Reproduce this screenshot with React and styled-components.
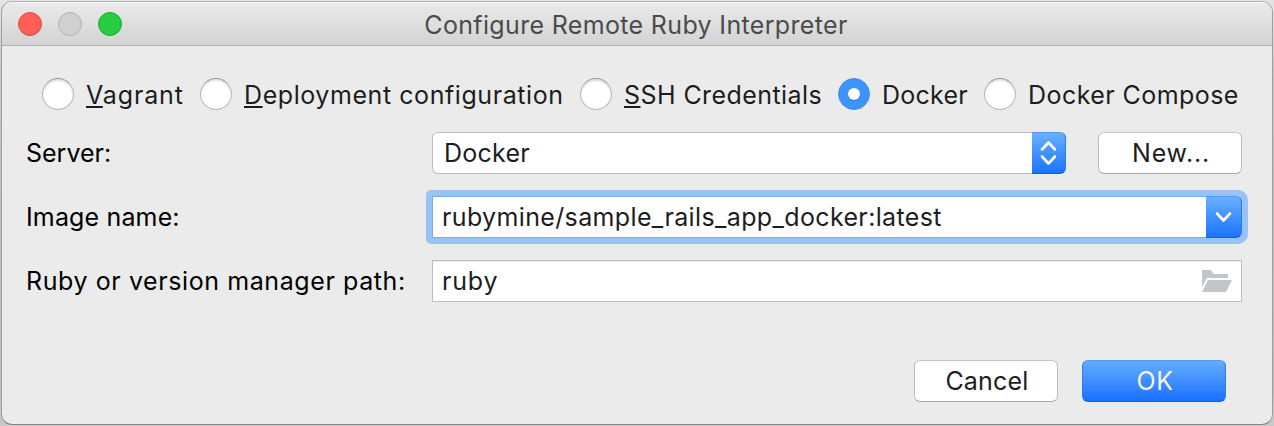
import React from "react";
import styled, { createGlobalStyle } from "styled-components";

const Global = createGlobalStyle`
  * { box-sizing: border-box; }
  body {
    margin: 0;
    background: linear-gradient(#e4e4e4, #c4c4c4 18%, #bdbdbd 90%, #c9c9c9);
    font: 25px/30px Inter, "Liberation Sans", sans-serif;
    color: #1d1d1f;
  }
  button, input { font: inherit; color: inherit; }
`;

const Screen = styled.div`
  width: 1274px;
  height: 426px;
  padding: 1px;
`;

const Dialog = styled.main`
  display: flex;
  flex-direction: column;
  height: 424px;
  border: 1px solid #a0a0a0;
  border-top-color: #b4b4b4;
  border-bottom-color: #858585;
  border-radius: 11px;
  background: #ebebeb;
  overflow: hidden;
`;

const TitleBar = styled.header`
  display: grid;
  grid-template-columns: 200px 1fr 200px;
  align-items: center;
  height: 44px;
  border-bottom: 1px solid #b0b0b0;
  background: linear-gradient(#f5f5f5 0, #e9e9e9 2px, #d3d3d3);
`;

const Lights = styled.div`
  display: flex;
  gap: 16px;
  padding-left: 16px;
`;

const Light = styled.span`
  width: 24px;
  height: 24px;
  border-radius: 50%;
  border: 1px solid ${(p) => p.$edge};
  background: ${(p) => p.$fill};
`;

const Title = styled.h1`
  margin: 0;
  padding: 2px 2px 0 0;
  font-size: 25px;
  font-weight: 400;
  color: #4b4b4b;
  text-align: center;
`;

const Text = styled.span`
  white-space: nowrap;
  letter-spacing: ${(p) => p.$track || 0}px;
`;

const RadioRow = styled.div`
  display: flex;
  padding: 32px 0 0 40px;
`;

const Radio = styled.div`
  display: flex;
  align-items: center;
  gap: 12px;
  width: ${(p) => p.$width}px;
  height: 32px;
`;

const RadioText = styled(Text)`
  padding-top: 2px;
`;

const Dot = styled.span`
  display: grid;
  place-items: center;
  flex: none;
  width: 32px;
  height: 32px;
  border-radius: 50%;
  border: 1px solid ${(p) => (p.$on ? "#3b92fd" : "#b9b9b9")};
  border-top-color: ${(p) => (p.$on ? "#3b92fd" : "#989898")};
  background: ${(p) => (p.$on ? "#3e94ff" : "#fff")};
  box-shadow: ${(p) => (p.$on ? "none" : "inset 0 2px 2px #dedede")};
  &::after {
    content: "";
    width: 12px;
    height: 12px;
    border-radius: 50%;
    background: #fff;
    box-shadow: ${(p) => (p.$on ? "0 1px 1px #2a70cc" : "none")};
  }
`;

const Mnemonic = styled.span`
  text-decoration: underline;
  text-decoration-thickness: 2px;
  text-decoration-skip-ink: none;
  text-underline-offset: 2px;
`;

const Form = styled.section`
  display: grid;
  grid-template-columns: 406px 634px 176px;
  grid-template-rows: repeat(3, 42px);
  row-gap: 22px;
  align-items: center;
  padding: 22px 0 0 24px;
`;

const Label = styled.label`
  color: #000;
`;

const Wide = styled.div`
  grid-column: 2 / 4;
`;

const Select = styled.div`
  display: flex;
  align-items: center;
  justify-content: space-between;
  height: 42px;
  padding-left: 12px;
  border-radius: 6px;
  background: #fff;
  box-shadow: inset 0 0 0 1px #bbb;
`;

const FocusRing = styled.div`
  margin: -6px;
  padding: 6px;
  border-radius: 5px 10px 10px 5px;
  background: #99c2f7;
`;

const ComboBox = styled(Select)`
  padding-left: 10px;
  border-radius: 0 6px 6px 0;
  box-shadow: inset 0 0 0 1px #79aaf0;
`;

const PathField = styled(Select)`
  padding: 0 10px;
  border-radius: 0;
  box-shadow: inset 0 0 0 1px #bdbdbd, inset 0 2px 0 #f0f0f0;
`;

const Arrow = styled.span`
  display: grid;
  place-items: center;
  width: ${(p) => p.$width}px;
  height: 42px;
  padding-bottom: ${(p) => p.$lift || 0}px;
  border: 1px solid;
  border-width: 1px 1px 1px 0;
  border-color: #4d9cf8 #2b7bff #1d58f5 #2b7bff;
  border-radius: 0 6px 6px 0;
  background: linear-gradient(#69b0ff, #1a74ff);
`;

const Button = styled.button`
  height: 42px;
  width: 144px;
  padding: 0 0 0 2px;
  border-radius: 6px;
  border: 1px solid;
  border-color: ${(p) => (p.$primary ? "#4c9bf9 #2c7cff #1c58f5" : "#c4c4c4 #bcbcbc #a9a9a9")};
  color: ${(p) => (p.$primary ? "#f4f4f4" : "#1d1d1f")};
  background: ${(p) => (p.$primary ? "linear-gradient(#65adff, #1a70ff)" : "#fff")};
`;

const NewCell = styled.div`
  padding-left: 32px;
`;

const Actions = styled.footer`
  display: flex;
  justify-content: flex-end;
  gap: 24px;
  padding: 58px 46px 0 0;
`;

const radios = [
  { key: "V", label: "agrant", width: 158, track: 0.85 },
  { key: "D", label: "eployment configuration", width: 380, track: 0.57 },
  { key: "S", label: "SH Credentials", width: 258, track: 0.43 },
  { label: "Docker", width: 146, track: 0.25, on: true },
  { label: "Docker Compose", width: 256, track: 0.44 },
];

const stroke = { fill: "none", stroke: "#fff", strokeWidth: 2.6, strokeLinecap: "round", strokeLinejoin: "round" };

export default function App() {
  return (
    <Screen>
      <Global />
      <Dialog>
        <TitleBar>
          <Lights>
            <Light $fill="#ff5f57" $edge="#e2463f" />
            <Light $fill="#d0d0d0" $edge="#b0b0b0" />
            <Light $fill="#28cc40" $edge="#14ae28" />
          </Lights>
          <Title><Text $track={0.34}>Configure Remote Ruby Interpreter</Text></Title>
        </TitleBar>
        <RadioRow>
          {radios.map((r) => (
            <Radio key={r.label} $width={r.width}>
              <Dot $on={r.on} />
              <RadioText $track={r.track}>{r.key && <Mnemonic>{r.key}</Mnemonic>}{r.label}</RadioText>
            </Radio>
          ))}
        </RadioRow>
        <Form>
          <Label><Text>Server:</Text></Label>
          <Select>
            <Text $track={0.25}>Docker</Text>
            <Arrow $width={34} $lift={1}>
              <svg width="18" height="26" viewBox="0 0 18 26"><path d="M2 9.500 8.500 2.500l6.500 7M2 16.500l6.500 7 6.500-7" {...stroke} /></svg>
            </Arrow>
          </Select>
          <NewCell><Button><Text $track={0.8}>New...</Text></Button></NewCell>
          <Label><Text $track={0.15}>Image name:</Text></Label>
          <Wide>
            <FocusRing>
              <ComboBox>
                <Text $track={0.36}>rubymine/sample_rails_app_docker:latest</Text>
                <Arrow $width={36}>
                  <svg width="18" height="12" viewBox="0 0 18 12"><path d="M2 2.500l6.500 7 6.500-7" {...stroke} /></svg>
                </Arrow>
              </ComboBox>
            </FocusRing>
          </Wide>
          <Label><Text $track={0.59}>Ruby or version manager path:</Text></Label>
          <Wide>
            <PathField>
              <Text $track={0.8}>ruby</Text>
              <svg width="31" height="22" viewBox="0 0 31 22" fill="#c1c6ca"><path d="M1 0h9l2.500 4H27v4H6L1 17zM7 10h24l-6 12H1z" /></svg>
            </PathField>
          </Wide>
        </Form>
        <Actions>
          <Button><Text $track={0.2}>Cancel</Text></Button>
          <Button $primary><Text $track={0.5}>OK</Text></Button>
        </Actions>
      </Dialog>
    </Screen>
  );
}
